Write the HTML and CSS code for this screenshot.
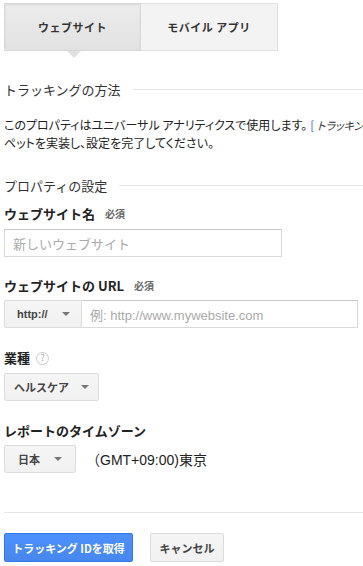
FILE: index.html
```html
<!DOCTYPE html>
<html lang="ja">
<head>
<meta charset="utf-8">
<link rel="stylesheet" href="styles.css">
</head>
<body>
<div class="page">
  <div class="tabs">
    <div class="tab active">ウェブサイト</div>
    <div class="tab">モバイル アプリ</div>
  </div>

  <div class="section-title first"><span>トラッキングの方法</span></div>
  <p class="desc">このプロパティはユニバーサル アナリティクスで使用します。<span class="bracket">[</span> <i>トラッキング ID</i> スニ<br>ペットを実装し、設定を完了してください。</p>

  <div class="section-title second"><span>プロパティの設定</span></div>

  <div class="label first-label">ウェブサイト名 <span class="req">必須</span></div>
  <div class="input name-input">新しいウェブサイト</div>

  <div class="label">ウェブサイトの URL <span class="req">必須</span></div>
  <div class="url-group">
    <div class="select proto">http://<span class="caret"></span></div>
    <div class="input url-input">例: http://www.mywebsite.com</div>
  </div>

  <div class="label lower">業種 <span class="help">?</span></div>
  <div class="select industry">ヘルスケア<span class="caret"></span></div>

  <div class="label lower">レポートのタイムゾーン</div>
  <div class="tz-row">
    <div class="select country">日本<span class="caret"></span></div>
    <span class="tz">（GMT+09:00)東京</span>
  </div>

  <div class="divider"></div>

  <div class="buttons">
    <div class="btn primary">トラッキング IDを取得</div>
    <div class="btn secondary">キャンセル</div>
  </div>
</div>
</body>
</html>
```

FILE: styles.css
```css
html, body {
  margin: 0;
  padding: 0;
  background: #fff;
  overflow: hidden;
}
body {
  font-family: "Noto Sans CJK JP", "Liberation Sans", sans-serif;
  color: #222;
  width: 363px;
  height: 566px;
}
.page {
  padding: 3px 0 0 4px;
  width: 420px;
}
.tabs {
  display: flex;
  height: 48px;
}
.tab {
  box-sizing: border-box;
  width: 137px;
  height: 48px;
  display: flex;
  align-items: center;
  justify-content: center;
  font-size: 11px;
  font-weight: bold;
  color: #333;
  background: #f3f3f3;
  border: 1px solid #e0e0e0;
  letter-spacing: 0.5px;
  position: relative;
}
.tab.active {
  background: linear-gradient(#ececec, #e2e2e2);
  border-color: #d8d8d8;
  box-shadow: inset 0 1px 2px rgba(0,0,0,0.08);
}
.tab.active::after {
  content: "";
  position: absolute;
  left: 62px;
  bottom: -8px;
  border-left: 7px solid transparent;
  border-right: 7px solid transparent;
  border-top: 7px solid #e0e0e0;
}
.tab + .tab {
  border-left: none;
}
.section-title {
  display: flex;
  align-items: center;
  font-size: 13px;
  line-height: 20px;
  color: #333;
  font-weight: normal;
}
.section-title::after {
  content: "";
  flex: 1;
  height: 1px;
  background: #e5e5e5;
  margin-left: 12px;
  margin-top: -1px;
}
.section-title.first { margin-top: 29px; }
.section-title.second { margin-top: 25px; }
.desc {
  margin: 16px 0 0;
  font-size: 12px;
  line-height: 17px;
  white-space: nowrap;
  color: #222;
  font-feature-settings: "palt";
}
.desc i {
  font-style: italic;
  font-size: 11px;
  color: #333;
}
.bracket { color: #4a6fb5; margin-left: 3px; }
.label {
  font-size: 13px;
  font-weight: bold;
  line-height: 18px;
  color: #222;
  margin-top: 20px;
  display: flex;
  align-items: center;
  gap: 4px;
}
.label.first-label { margin-top: 9px; }
.label.lower { margin-top: 21px; }
.req {
  font-size: 10px;
  color: #666;
  margin-left: 6px;
}
.help {
  box-sizing: border-box;
  width: 13px;
  height: 13px;
  border: 1px solid #ccc;
  border-radius: 50%;
  font-size: 9px;
  font-weight: normal;
  color: #aaa;
  display: flex;
  align-items: center;
  justify-content: center;
  margin-left: 2px;
}
.input {
  box-sizing: border-box;
  height: 28px;
  border: 1px solid #d9d9d9;
  border-top-color: #c8c8c8;
  display: flex;
  align-items: center;
  padding-left: 8px;
  font-size: 13px;
  color: #aaa;
  background: #fff;
}
.name-input {
  width: 278px;
  margin-top: 6px;
  font-family: "Noto Sans CJK JP", sans-serif;
}
.url-group {
  display: flex;
  margin-top: 5px;
  width: 354px;
}
.url-input {
  flex: 1;
  border-left: none;
  font-family: "Liberation Sans", "Noto Sans CJK JP", sans-serif;
}
.select {
  box-sizing: border-box;
  height: 28px;
  border: 1px solid #dcdcdc;
  border-radius: 2px;
  background: linear-gradient(#f5f5f5, #f1f1f1);
  display: flex;
  align-items: center;
  font-size: 11px;
  font-weight: bold;
  color: #444;
}
.caret {
  width: 0;
  height: 0;
  border-left: 4px solid transparent;
  border-right: 4px solid transparent;
  border-top: 4px solid #777;
  margin-left: auto;
}
.proto {
  width: 78px;
  padding: 0 11px 0 12px;
  border-radius: 2px 0 0 2px;
  font-family: "Liberation Sans", sans-serif;
}
.industry {
  width: 95px;
  margin-top: 6px;
  padding: 0 9px 0 9px;
}
.tz-row {
  display: flex;
  align-items: center;
  margin-top: 5px;
}
.country {
  width: 72px;
  padding: 0 13px 0 13px;
}
.tz {
  margin-left: 10px;
  font-size: 14px;
  color: #222;
  font-family: "Liberation Sans", "Noto Sans CJK JP", sans-serif;
}
.divider {
  height: 1px;
  background: #e5e5e5;
  margin-top: 39px;
}
.buttons {
  display: flex;
  gap: 17px;
  margin-top: 20px;
}
.btn {
  box-sizing: border-box;
  height: 29px;
  border-radius: 2px;
  display: flex;
  align-items: center;
  justify-content: center;
  font-size: 11px;
  font-weight: bold;
}
.btn.primary {
  width: 129px;
  background: linear-gradient(#4d90fe, #4787ed);
  border: 1px solid #3079ed;
  color: #fff;
}
.btn.secondary {
  width: 74px;
  background: linear-gradient(#f5f5f5, #f1f1f1);
  border: 1px solid #dcdcdc;
  color: #444;
}
```
